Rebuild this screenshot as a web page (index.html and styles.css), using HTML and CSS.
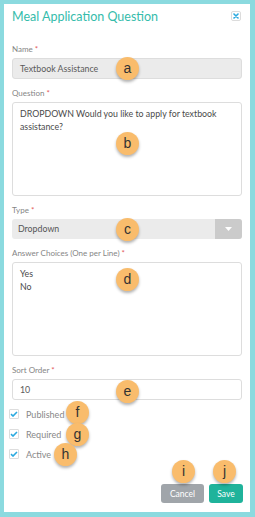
FILE: index.html
```html
<!DOCTYPE html>
<html lang="en">
<head>
  <meta charset="UTF-8">
  <meta name="viewport" content="width=device-width, initial-scale=1.0">
  <title>Meal Application Question</title>
  <link rel="stylesheet" href="styles.css">
</head>
<body>

  <div class="modal">
    <!-- Header -->
    <div class="modal-header">
      <h1>Meal Application Question</h1>
      <span class="close-btn">
        <svg width="6" height="6" viewBox="0 0 6 6"><path d="M1 1L5 5M5 1L1 5" stroke="#2aa9df" stroke-width="1.6" stroke-linecap="round"/></svg>
      </span>
    </div>

    <!-- Form -->
    <div class="form-group">
      <label>Name <span class="req">*</span></label>
      <div class="field field-disabled">Textbook Assistance</div>
    </div>

    <div class="form-group">
      <label>Question <span class="req">*</span></label>
      <div class="field area">DROPDOWN Would you like to apply for textbook assistance?</div>
    </div>

    <div class="form-group">
      <label>Type <span class="req">*</span></label>
      <div class="select">
        <span class="select-text">Dropdown</span>
        <span class="select-btn">
          <svg width="7" height="4" viewBox="0 0 7 4"><path d="M0 0H7L3.5 4Z" fill="#fff"/></svg>
        </span>
      </div>
    </div>

    <div class="form-group">
      <label>Answer Choices (One per Line) <span class="req">*</span></label>
      <div class="field area">Yes<br>No</div>
    </div>

    <div class="form-group">
      <label>Sort Order <span class="req">*</span></label>
      <div class="field">10</div>
    </div>

    <div class="checks">
      <div class="check-row"><span class="box"><svg width="8" height="6" viewBox="0 0 8 6"><path d="M1 3.2L3 5L7 1" fill="none" stroke="#2aa9df" stroke-width="1.6"/></svg></span>Published</div>
      <div class="check-row"><span class="box"><svg width="8" height="6" viewBox="0 0 8 6"><path d="M1 3.2L3 5L7 1" fill="none" stroke="#2aa9df" stroke-width="1.6"/></svg></span>Required</div>
      <div class="check-row"><span class="box"><svg width="8" height="6" viewBox="0 0 8 6"><path d="M1 3.2L3 5L7 1" fill="none" stroke="#2aa9df" stroke-width="1.6"/></svg></span>Active</div>
    </div>

    <div class="modal-footer">
      <button class="btn btn-cancel">Cancel</button>
      <button class="btn btn-save">Save</button>
    </div>
  </div>

  <!-- Callout markers -->
  <span class="marker" style="left:116px;top:57px">a</span>
  <span class="marker" style="left:116px;top:132px">b</span>
  <span class="marker" style="left:116px;top:218px">c</span>
  <span class="marker" style="left:116px;top:268px">d</span>
  <span class="marker" style="left:116px;top:380px">e</span>
  <span class="marker" style="left:66px;top:401px">f</span>
  <span class="marker" style="left:66px;top:423px">g</span>
  <span class="marker" style="left:54px;top:443px">h</span>
  <span class="marker" style="left:172px;top:460px">i</span>
  <span class="marker" style="left:213px;top:460px">j</span>

</body>
</html>
```

FILE: styles.css
```css
body {
  margin: 0;
  background-color: #8bdadf;
  font-family: Lato, "Open Sans", Arial, sans-serif;
  width: 255px;
  height: 517px;
  overflow: hidden;
}

.modal {
  background: white;
  margin: 4px 0 0 4px;
  width: 230px;
  height: 508px;
  padding: 0 8px;
}

.modal-header {
  display: flex;
  justify-content: space-between;
  align-items: flex-start;
  padding-top: 3px;
  margin-bottom: 15px;
}

.modal-header h1 {
  margin: 0;
  font-size: 12.5px;
  line-height: 20px;
  font-weight: normal;
  color: #35bcab;
}

.close-btn {
  width: 8px;
  height: 8px;
  margin-top: 4px;
  margin-right: 1px;
  border: 1px solid #dcdcdc;
  border-radius: 2px;
  display: flex;
  align-items: center;
  justify-content: center;
}

.form-group {
  margin-bottom: 7px;
}

.form-group label {
  display: block;
  font-size: 8px;
  line-height: 14px;
  color: #858585;
  margin-bottom: 2px;
}

.req {
  color: #e35b5b;
}

.field {
  border: 1px solid #ddd;
  border-radius: 3px;
  height: 19px;
  padding: 0 7px;
  font-size: 8.8px;
  line-height: 19px;
  color: #5a5a5a;
}

.field-disabled {
  background-color: #ebebeb;
}

.area {
  height: 82px;
  padding: 5px 7px;
  line-height: 12.5px;
  color: #4a4a4a;
}

.select {
  display: flex;
  height: 20px;
  border-radius: 3px;
  overflow: hidden;
  background-color: #ebebeb;
}

.select-text {
  flex: 1;
  padding-left: 6px;
  font-size: 8.8px;
  line-height: 20px;
  color: #555;
}

.select-btn {
  width: 27px;
  background-color: #cbcbcb;
  display: flex;
  align-items: center;
  justify-content: center;
}

.checks {
  margin: -3px 0 0 -3px;
}

.check-row {
  display: flex;
  align-items: center;
  height: 20px;
  font-size: 9px;
  color: #888;
}

.box {
  width: 8px;
  height: 8px;
  border: 1px solid #ddd;
  border-radius: 1px;
  margin-right: 7px;
  display: flex;
  align-items: center;
  justify-content: center;
}

.modal-footer {
  display: flex;
  justify-content: flex-end;
  gap: 5px;
  margin-top: 20px;
}

.btn {
  border: none;
  border-radius: 3px;
  color: white;
  font-family: Lato, Arial, sans-serif;
  font-size: 8.5px;
  height: 19px;
  padding: 0;
  cursor: pointer;
}

.btn-cancel {
  width: 43px;
  background-color: #a0a5aa;
}

.btn-save {
  width: 34px;
  margin-right: -1px;
  background-color: #1fb39b;
}

.marker {
  position: absolute;
  width: 23px;
  height: 23px;
  border-radius: 50%;
  background-color: #f9bc6c;
  box-shadow: 0 2px 3px rgba(0, 0, 0, 0.3);
  font-family: Arial, sans-serif;
  font-size: 14px;
  line-height: 22px;
  text-align: center;
  color: #333;
}
```
